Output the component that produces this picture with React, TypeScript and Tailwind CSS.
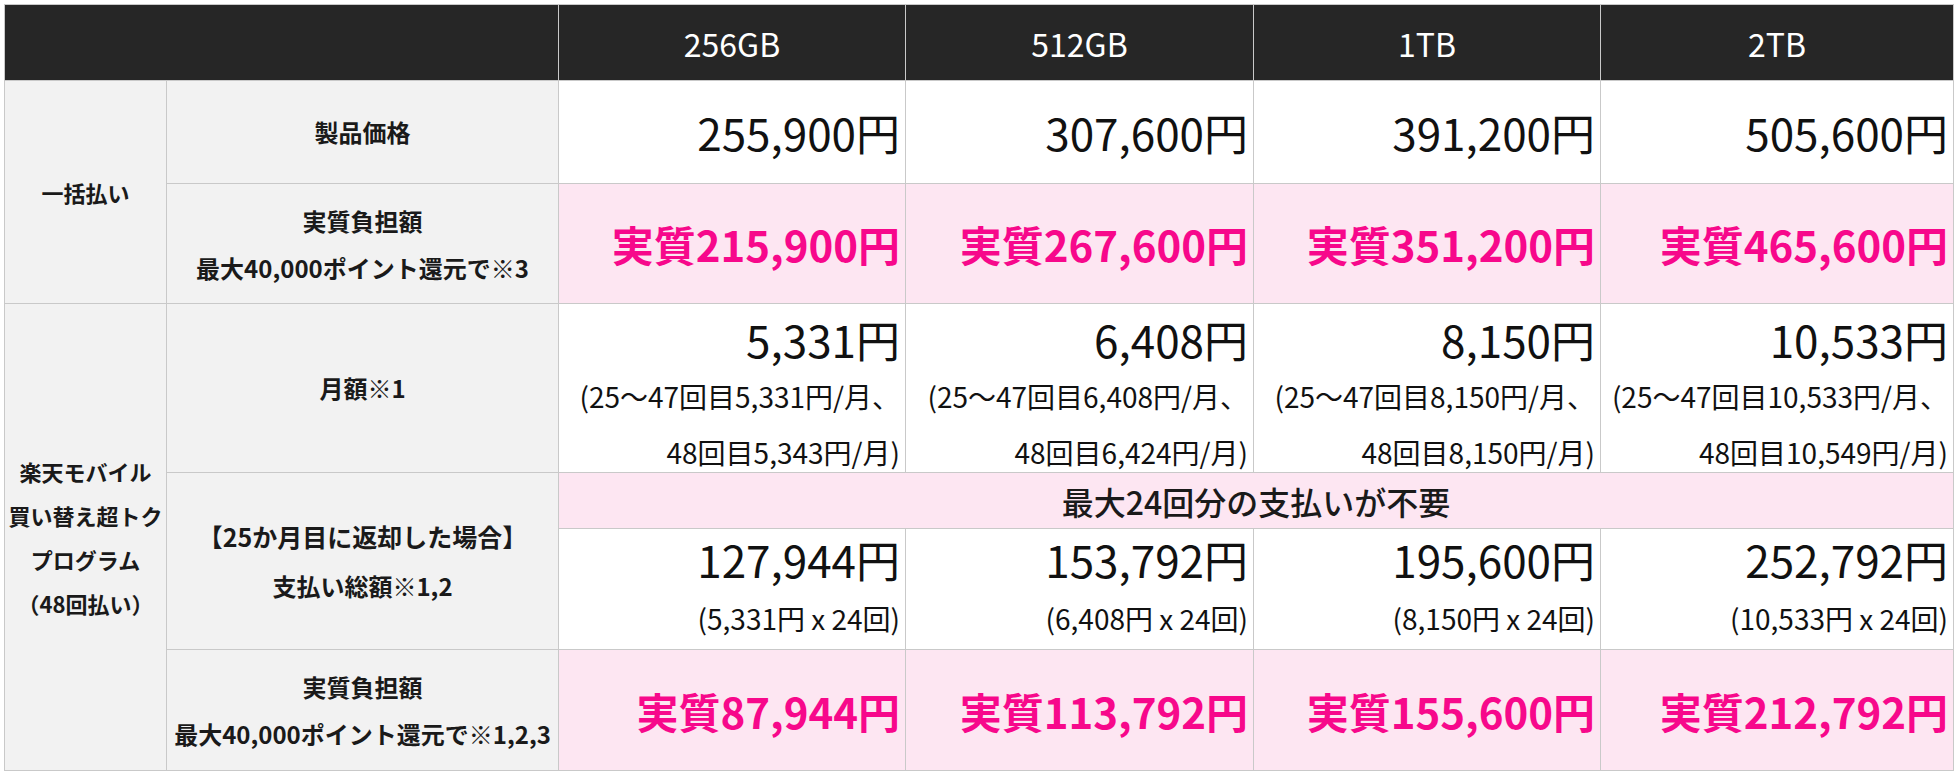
const plans = [
  {
    size: "256GB",
    price: "255,900円",
    net: "実質215,900円",
    monthly: "5,331円",
    monthlyNote: ["(25～47回目5,331円/月、", "48回目5,343円/月)"],
    total: "127,944円",
    totalNote: "(5,331円 x 24回)",
    netProgram: "実質87,944円",
  },
  {
    size: "512GB",
    price: "307,600円",
    net: "実質267,600円",
    monthly: "6,408円",
    monthlyNote: ["(25～47回目6,408円/月、", "48回目6,424円/月)"],
    total: "153,792円",
    totalNote: "(6,408円 x 24回)",
    netProgram: "実質113,792円",
  },
  {
    size: "1TB",
    price: "391,200円",
    net: "実質351,200円",
    monthly: "8,150円",
    monthlyNote: ["(25～47回目8,150円/月、", "48回目8,150円/月)"],
    total: "195,600円",
    totalNote: "(8,150円 x 24回)",
    netProgram: "実質155,600円",
  },
  {
    size: "2TB",
    price: "505,600円",
    net: "実質465,600円",
    monthly: "10,533円",
    monthlyNote: ["(25～47回目10,533円/月、", "48回目10,549円/月)"],
    total: "252,792円",
    totalNote: "(10,533円 x 24回)",
    netProgram: "実質212,792円",
  },
];

const colStart = ["col-start-3", "col-start-4", "col-start-5", "col-start-6"];

export default function App() {
  return (
    <div className="min-h-screen bg-white pl-[4px] pt-[4px] font-['Noto_Sans_CJK_JP',sans-serif] text-[#1a1a1a]">
      <div className="grid w-fit grid-cols-[161px_391px_346px_347px_346px_352px] grid-rows-[75px_102px_119px_168px_55px_120px_120px] gap-px bg-[#c9c9c9] p-px">
        {/* header */}
        <div className="col-span-2 col-start-1 row-start-1 bg-[#262626]" />
        {plans.map((p, i) => (
          <div
            key={p.size}
            className={`${colStart[i]} row-start-1 flex items-center justify-center bg-[#262626] text-[32px] text-white`}
          >
            {p.size}
          </div>
        ))}

        {/* 一括払い */}
        <div className="col-start-1 row-span-2 row-start-2 flex items-center justify-center bg-[#f2f2f2] text-[22px] font-bold">
          一括払い
        </div>
        <div className="col-start-2 row-start-2 flex items-center justify-center bg-[#f2f2f2] text-[24px] font-bold">
          製品価格
        </div>
        <div className="col-start-2 row-start-3 flex flex-col items-center justify-center bg-[#f2f2f2] text-[24px] font-bold leading-[47px]">
          <span>実質負担額</span>
          <span>最大40,000ポイント還元で※3</span>
        </div>
        {plans.map((p, i) => (
          <div
            key={p.size + "price"}
            className={`${colStart[i]} row-start-2 flex items-center justify-end bg-white pr-[5px] text-[44px] text-[#111]`}
          >
            {p.price}
          </div>
        ))}
        {plans.map((p, i) => (
          <div
            key={p.size + "net"}
            className={`${colStart[i]} row-start-3 flex items-center justify-end bg-[#fde6f2] pr-[5px] text-[42px] font-bold text-[#f7088b]`}
          >
            {p.net}
          </div>
        ))}

        {/* 買い替え超トクプログラム */}
        <div className="col-start-1 row-span-4 row-start-4 flex flex-col items-center justify-center bg-[#f2f2f2] text-[22px] font-bold leading-[44px]">
          <span>楽天モバイル</span>
          <span>買い替え超トク</span>
          <span>プログラム</span>
          <span>（48回払い）</span>
        </div>
        <div className="col-start-2 row-start-4 flex items-center justify-center bg-[#f2f2f2] text-[24px] font-bold">
          月額※1
        </div>
        {plans.map((p, i) => (
          <div
            key={p.size + "monthly"}
            className={`${colStart[i]} row-start-4 flex flex-col items-end bg-white pr-[5px] pt-[6px] text-[#111]`}
          >
            <span className="text-[44px] leading-[58px]">{p.monthly}</span>
            {p.monthlyNote.map((n) => (
              <span key={n} className="whitespace-nowrap text-[28px] leading-[56px]">
                {n}
              </span>
            ))}
          </div>
        ))}

        <div className="col-start-2 row-span-2 row-start-5 flex flex-col items-center justify-center bg-[#f2f2f2] font-bold leading-[50px]">
          <span className="text-[25px]">【25か月目に返却した場合】</span>
          <span className="text-[24px]">支払い総額※1,2</span>
        </div>
        <div className="col-span-4 col-start-3 row-start-5 flex items-center justify-center bg-[#fde6f2] text-[32px] font-medium">
          最大24回分の支払いが不要
        </div>
        {plans.map((p, i) => (
          <div
            key={p.size + "total"}
            className={`${colStart[i]} row-start-6 flex flex-col items-end bg-white pr-[5px] pt-[1px] text-[#111]`}
          >
            <span className="text-[44px] leading-[58px]">{p.total}</span>
            <span className="whitespace-nowrap text-[28px] leading-[60px]">{p.totalNote}</span>
          </div>
        ))}

        <div className="col-start-2 row-start-7 flex flex-col items-center justify-center bg-[#f2f2f2] text-[24px] font-bold leading-[47px]">
          <span>実質負担額</span>
          <span>最大40,000ポイント還元で※1,2,3</span>
        </div>
        {plans.map((p, i) => (
          <div
            key={p.size + "netProgram"}
            className={`${colStart[i]} row-start-7 flex items-center justify-end bg-[#fde6f2] pr-[5px] text-[42px] font-bold text-[#f7088b]`}
          >
            {p.netProgram}
          </div>
        ))}
      </div>
    </div>
  );
}
